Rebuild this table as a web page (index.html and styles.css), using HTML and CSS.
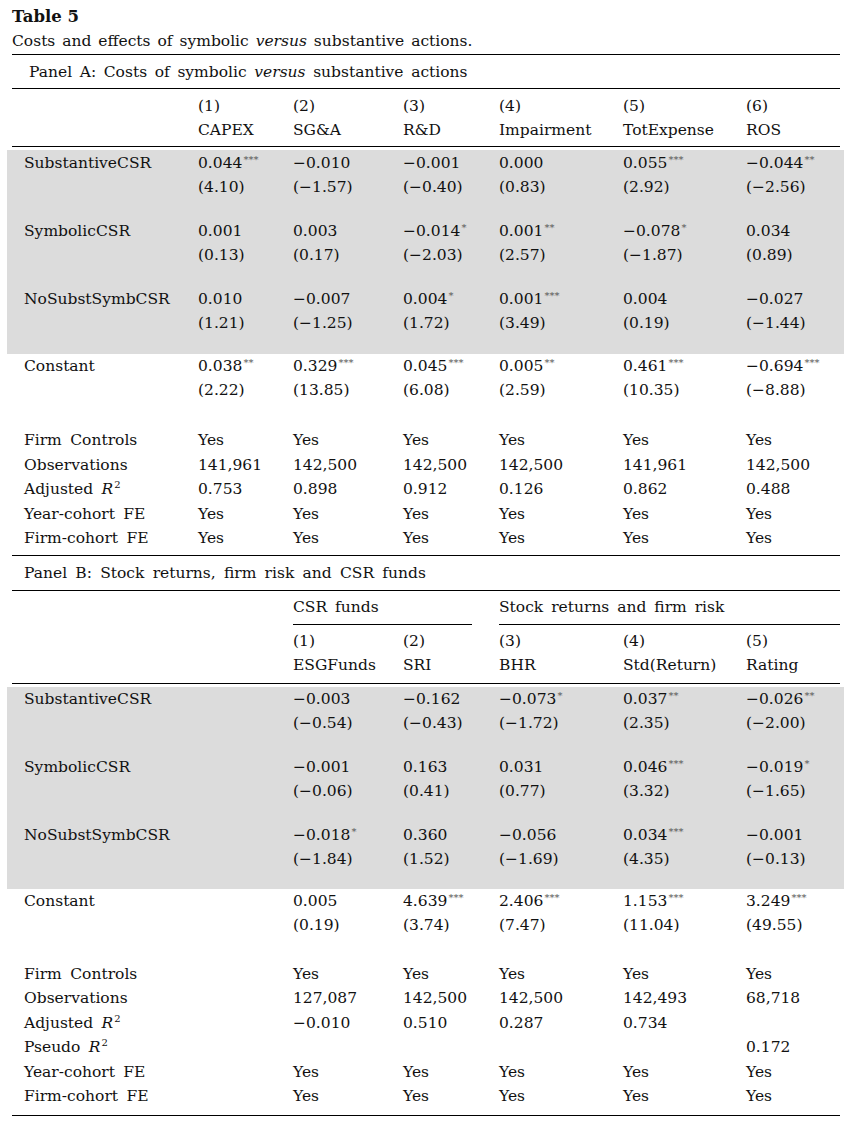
FILE: index.html
```html
<!DOCTYPE html>
<html>
<head>
<meta charset="utf-8">
<link rel="stylesheet" href="styles.css">
</head>
<body>
<div class="page">
  <div class="title">Table 5</div>
  <div class="caption">Costs and effects of symbolic <i>versus</i> substantive actions.</div>

  <div class="panel-title pa">Panel A: Costs of symbolic <i>versus</i> substantive actions</div>
  <div class="row head">
    <div></div>
    <div>(1)<br>CAPEX</div>
    <div>(2)<br>SG&amp;A</div>
    <div>(3)<br>R&amp;D</div>
    <div>(4)<br>Impairment</div>
    <div>(5)<br>TotExpense</div>
    <div>(6)<br>ROS</div>
  </div>
  <div class="shade sa">
    <div class="row block">
      <div class="lab">SubstantiveCSR</div>
      <div>0.044<sup>***</sup><br>(4.10)</div>
      <div>−0.010<br>(−1.57)</div>
      <div>−0.001<br>(−0.40)</div>
      <div>0.000<br>(0.83)</div>
      <div>0.055<sup>***</sup><br>(2.92)</div>
      <div>−0.044<sup>**</sup><br>(−2.56)</div>
    </div>
    <div class="row block">
      <div class="lab">SymbolicCSR</div>
      <div>0.001<br>(0.13)</div>
      <div>0.003<br>(0.17)</div>
      <div>−0.014<sup>*</sup><br>(−2.03)</div>
      <div>0.001<sup>**</sup><br>(2.57)</div>
      <div>−0.078<sup>*</sup><br>(−1.87)</div>
      <div>0.034<br>(0.89)</div>
    </div>
    <div class="row block">
      <div class="lab">NoSubstSymbCSR</div>
      <div>0.010<br>(1.21)</div>
      <div>−0.007<br>(−1.25)</div>
      <div>0.004<sup>*</sup><br>(1.72)</div>
      <div>0.001<sup>***</sup><br>(3.49)</div>
      <div>0.004<br>(0.19)</div>
      <div>−0.027<br>(−1.44)</div>
    </div>
  </div>
  <div class="row block">
    <div class="lab">Constant</div>
    <div>0.038<sup>**</sup><br>(2.22)</div>
    <div>0.329<sup>***</sup><br>(13.85)</div>
    <div>0.045<sup>***</sup><br>(6.08)</div>
    <div>0.005<sup>**</sup><br>(2.59)</div>
    <div>0.461<sup>***</sup><br>(10.35)</div>
    <div>−0.694<sup>***</sup><br>(−8.88)</div>
  </div>
  <div class="stats sta">
    <div class="row">
      <div class="lab">Firm Controls</div>
      <div>Yes</div><div>Yes</div><div>Yes</div><div>Yes</div><div>Yes</div><div>Yes</div>
    </div>
    <div class="row">
      <div class="lab">Observations</div>
      <div>141,961</div><div>142,500</div><div>142,500</div><div>142,500</div><div>141,961</div><div>142,500</div>
    </div>
    <div class="row">
      <div class="lab">Adjusted <i>R</i><sup class="sq">2</sup></div>
      <div>0.753</div><div>0.898</div><div>0.912</div><div>0.126</div><div>0.862</div><div>0.488</div>
    </div>
    <div class="row">
      <div class="lab">Year-cohort FE</div>
      <div>Yes</div><div>Yes</div><div>Yes</div><div>Yes</div><div>Yes</div><div>Yes</div>
    </div>
    <div class="row">
      <div class="lab">Firm-cohort FE</div>
      <div>Yes</div><div>Yes</div><div>Yes</div><div>Yes</div><div>Yes</div><div>Yes</div>
    </div>
  </div>

  <div class="panel-title pb">Panel B: Stock returns, firm risk and CSR funds</div>
  <div class="row groups">
    <div class="g1">CSR funds</div>
    <div class="g2">Stock returns and firm risk</div>
  </div>
  <div class="row head headb">
    <div></div>
    <div></div>
    <div>(1)<br>ESGFunds</div>
    <div>(2)<br>SRI</div>
    <div>(3)<br>BHR</div>
    <div>(4)<br>Std(Return)</div>
    <div>(5)<br>Rating</div>
  </div>
  <div class="shade sb">
    <div class="row block">
      <div class="lab">SubstantiveCSR</div>
      <div></div>
      <div>−0.003<br>(−0.54)</div>
      <div>−0.162<br>(−0.43)</div>
      <div>−0.073<sup>*</sup><br>(−1.72)</div>
      <div>0.037<sup>**</sup><br>(2.35)</div>
      <div>−0.026<sup>**</sup><br>(−2.00)</div>
    </div>
    <div class="row block">
      <div class="lab">SymbolicCSR</div>
      <div></div>
      <div>−0.001<br>(−0.06)</div>
      <div>0.163<br>(0.41)</div>
      <div>0.031<br>(0.77)</div>
      <div>0.046<sup>***</sup><br>(3.32)</div>
      <div>−0.019<sup>*</sup><br>(−1.65)</div>
    </div>
    <div class="row block">
      <div class="lab">NoSubstSymbCSR</div>
      <div></div>
      <div>−0.018<sup>*</sup><br>(−1.84)</div>
      <div>0.360<br>(1.52)</div>
      <div>−0.056<br>(−1.69)</div>
      <div>0.034<sup>***</sup><br>(4.35)</div>
      <div>−0.001<br>(−0.13)</div>
    </div>
  </div>
  <div class="row block">
    <div class="lab">Constant</div>
    <div></div>
    <div>0.005<br>(0.19)</div>
    <div>4.639<sup>***</sup><br>(3.74)</div>
    <div>2.406<sup>***</sup><br>(7.47)</div>
    <div>1.153<sup>***</sup><br>(11.04)</div>
    <div>3.249<sup>***</sup><br>(49.55)</div>
  </div>
  <div class="stats stb">
    <div class="row">
      <div class="lab">Firm Controls</div><div></div>
      <div>Yes</div><div>Yes</div><div>Yes</div><div>Yes</div><div>Yes</div>
    </div>
    <div class="row">
      <div class="lab">Observations</div><div></div>
      <div>127,087</div><div>142,500</div><div>142,500</div><div>142,493</div><div>68,718</div>
    </div>
    <div class="row">
      <div class="lab">Adjusted <i>R</i><sup class="sq">2</sup></div><div></div>
      <div>−0.010</div><div>0.510</div><div>0.287</div><div>0.734</div><div></div>
    </div>
    <div class="row">
      <div class="lab">Pseudo <i>R</i><sup class="sq">2</sup></div><div></div>
      <div></div><div></div><div></div><div></div><div>0.172</div>
    </div>
    <div class="row">
      <div class="lab">Year-cohort FE</div><div></div>
      <div>Yes</div><div>Yes</div><div>Yes</div><div>Yes</div><div>Yes</div>
    </div>
    <div class="row">
      <div class="lab">Firm-cohort FE</div><div></div>
      <div>Yes</div><div>Yes</div><div>Yes</div><div>Yes</div><div>Yes</div>
    </div>
  </div>
</div>
</body>
</html>
```

FILE: styles.css
```css
body {
  margin: 0;
  background: #ffffff;
  color: #111111;
  font-family: "DejaVu Serif", serif;
  font-size: 15.5px;
}

.page {
  width: 828px;
  margin-left: 12px;
}

.title {
  font-weight: bold;
  font-size: 16.5px;
  line-height: 24px;
  margin-top: 5px;
}

.caption {
  line-height: 24px;
  padding-bottom: 1px;
  border-bottom: 1px solid #000;
  word-spacing: 2px;
}

.panel-title {
  line-height: 24px;
  border-bottom: 1px solid #000;
}

.pa {
  padding: 5px 0 4px 17px;
  word-spacing: 2.7px;
}

.pb {
  padding: 5px 0 5px 12px;
  word-spacing: 3.3px;
}

.row {
  display: grid;
  grid-template-columns: 174px 95px 110px 96px 124px 123px 94px;
  padding-left: 12px;
  line-height: 24px;
}

.lab {
  word-spacing: 3.5px;
}

.head {
  padding-top: 5px;
  padding-bottom: 4px;
  border-bottom: 1px solid #000;
}

.groups {
  padding-top: 4px;
}

.groups .g1 {
  grid-column: 3 / span 2;
  margin-right: 27px;
  padding-bottom: 5px;
  border-bottom: 1px solid #000;
  word-spacing: 3px;
}

.groups .g2 {
  grid-column: 5 / span 3;
  padding-bottom: 5px;
  border-bottom: 1px solid #000;
  word-spacing: 3px;
}

.headb {
  padding-top: 4px;
  padding-bottom: 6px;
}

.shade {
  background: #dcdcdc;
  margin: 3px -4px 0 -5px;
  padding-left: 5px;
  padding-right: 4px;
}

.sa {
  padding-top: 1px;
  padding-bottom: 19px;
}

.sb {
  padding-top: 0;
  padding-bottom: 18px;
}

.shade .block + .block {
  margin-top: 20px;
}

sup {
  font-size: 10px;
  line-height: 0;
  vertical-align: 5px;
  color: #555555;
  margin-left: 1px;
}

sup.sq {
  color: #111111;
  font-size: 10px;
  vertical-align: 6px;
}

.stats {
  border-bottom: 1px solid #000;
}

.stats .row {
  line-height: 24.5px;
}

.sta {
  margin-top: 26px;
  padding-bottom: 4px;
}

.stb {
  margin-top: 25px;
  padding-bottom: 6px;
}

.stb .row {
  line-height: 24.6px;
}
```
